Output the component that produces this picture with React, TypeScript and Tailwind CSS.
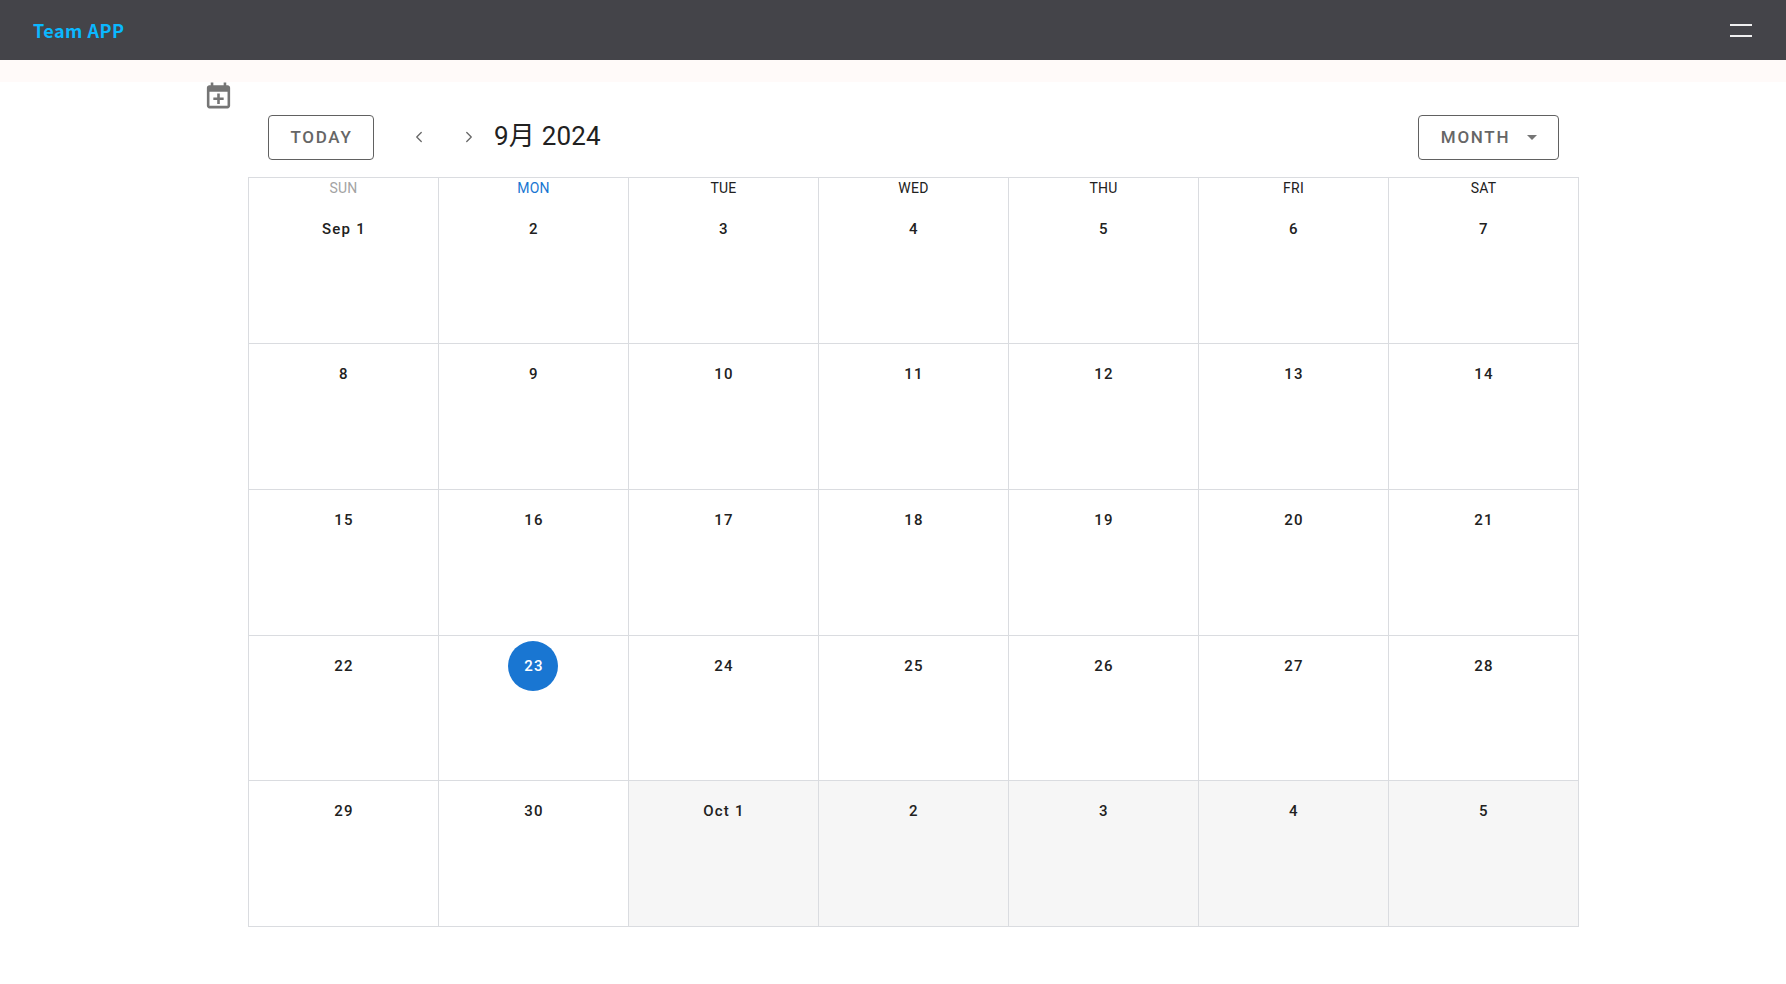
import { ChevronLeft, ChevronRight } from "lucide-react"

const weekDays = ["SUN", "MON", "TUE", "WED", "THU", "FRI", "SAT"]

const weeks = [
    ["Sep 1", "2", "3", "4", "5", "6", "7"],
    ["8", "9", "10", "11", "12", "13", "14"],
    ["15", "16", "17", "18", "19", "20", "21"],
    ["22", "23", "24", "25", "26", "27", "28"],
    ["29", "30", "Oct 1", "2", "3", "4", "5"],
]

const rowHeights = ["h-[146px]", "h-[146px]", "h-[145px]", "h-[146px]"]

function Header({ label, index }: { label: string; index: number }) {
    const color = index === 0 ? "text-[#a3a3a3]" : index === 1 ? "text-[#1976d2]" : "text-[#212121]"
    return (
        <div className={`border-r border-[#dadce0] text-center text-[14px] leading-[20px] tracking-[0.25px] ${color}`}>
            {label}
        </div>
    )
}

function Cell({ label, today, muted }: { label: string; today?: boolean; muted?: boolean }) {
    return (
        <div className={`flex flex-col items-center border-r border-[#dadce0] ${muted ? "bg-[#f6f6f6]" : ""}`}>
            <div
                className={`mt-[5px] flex h-[50px] items-center justify-center rounded-full text-[15px] font-medium tracking-[1.250px] ${
                    today ? "mr-[1px] w-[50px] bg-[#1976d2] pl-[2px] text-white" : "pl-[1px] text-[#212121]"
                }`}
            >
                {label}
            </div>
        </div>
    )
}

export default function App() {
    return (
        <div className="min-h-[984px] bg-white font-['Roboto',sans-serif]">
            <nav className="flex h-[60px] items-center justify-between bg-[#444449] pl-[33px] pr-[34px]">
                <span className="font-['Noto_Sans_CJK_JP',sans-serif] text-[18px] font-bold tracking-[0.5px] text-[#0ab8ff]">Team APP</span>
                <button className="flex w-[22px] flex-col gap-[9px] pt-[1px]">
                    <span className="h-[2px] bg-[#f0f0f0]" />
                    <span className="h-[2px] bg-[#f0f0f0]" />
                </button>
            </nav>
            <div className="h-[22px] bg-[#fffaf9]" />
            <div className="relative ml-[248px] w-[1331px] pt-[33px]">
                <svg className="absolute left-[-45px] top-[-2px] h-[31px] w-[31px]" viewBox="0 0 24 24" fill="#757575">
                    <path d="M19 4h-1V2h-2v2H8V2H6v2H5C3.900 4 3 4.900 3 6v14c0 1.100.9 2 2 2h14c1.100 0 2-.9 2-2V6c0-1.100-.9-2-2-2zm0 16H5V9h14v11z" />
                    <path d="M11 10.500h2V13.500h3v2h-3v3h-2v-3H8v-2h3z" />
                </svg>
                <div className="flex items-center pl-[20px] pr-[20px]">
                    <button className="h-[45px] w-[106px] rounded-[4px] border border-[#616161] pl-[1px] text-[17px] font-medium tracking-[1.700px] text-[#666666]">TODAY</button>
                    <button className="mb-[2px] ml-[33px] flex h-[24px] w-[24px] items-center justify-center text-[#666666]">
                        <ChevronLeft size={18} strokeWidth={1.750} />
                    </button>
                    <button className="mb-[2px] ml-[26px] flex h-[24px] w-[24px] items-center justify-center text-[#666666]">
                        <ChevronRight size={18} strokeWidth={1.750} />
                    </button>
                    <span className="mb-[3px] ml-[13px] font-['Roboto','Noto_Sans_CJK_JP',sans-serif] text-[26px] leading-[36px] tracking-[0.2px] text-[#212121]">9月 2024</span>
                    <button className="ml-auto flex h-[45px] w-[141px] items-center justify-center gap-[17px] rounded-[4px] border border-[#616161] pl-[1px] text-[17px] font-medium tracking-[1.700px] text-[#666666]">
                        MONTH
                        <span className="h-0 w-0 border-x-[5px] border-t-[5px] border-x-transparent border-t-[#757575]" />
                    </button>
                </div>
                <div className="mt-[17px] border-y border-l border-[#dadce0]">
                    <div className="grid h-[165px] grid-cols-[repeat(7,190px)] grid-rows-[21px_1fr]">
                        {weekDays.map((d, i) => (
                            <Header key={d} label={d} index={i} />
                        ))}
                        {weeks[0].map((d, i) => (
                            <Cell key={d + i} label={d} />
                        ))}
                    </div>
                    {weeks.slice(1).map((week, w) => (
                        <div key={w} className={`grid grid-cols-[repeat(7,190px)] border-t border-[#dadce0] ${rowHeights[w]}`}>
                            {week.map((d, i) => (
                                <Cell key={d + i} label={d} today={d === "23"} muted={w === 3 && i >= 2} />
                            ))}
                        </div>
                    ))}
                </div>
            </div>
        </div>
    )
}
